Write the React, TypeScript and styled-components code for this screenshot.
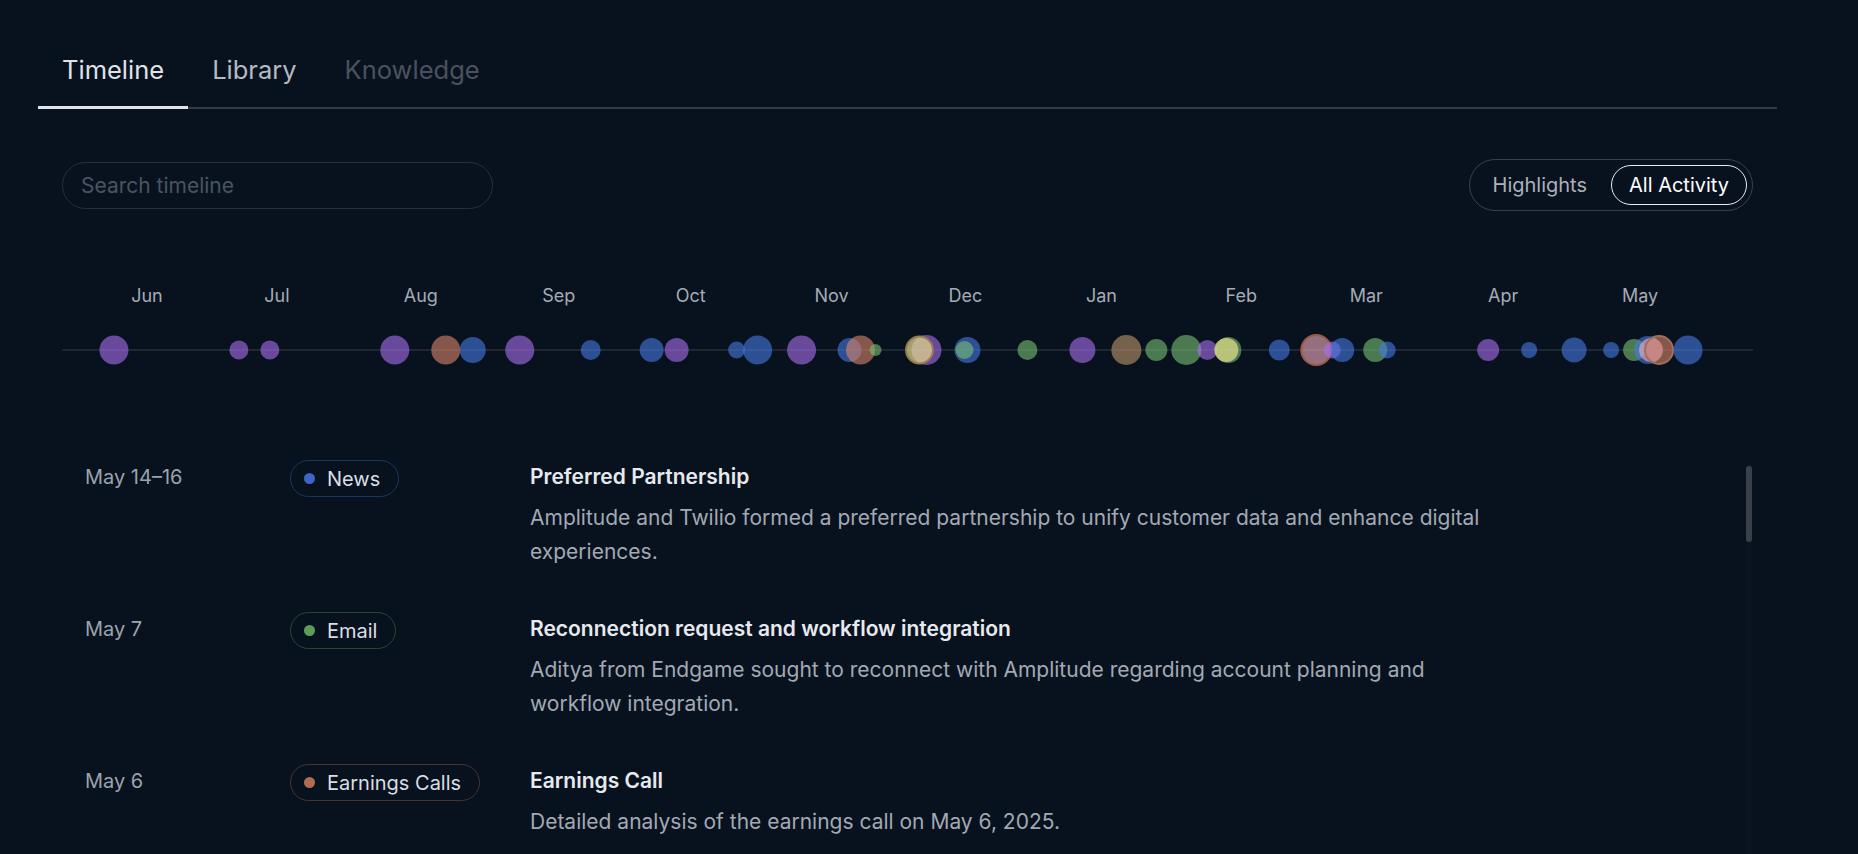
import React, { useState } from 'react';
import styled, { createGlobalStyle } from 'styled-components';

const GlobalStyle = createGlobalStyle`
  html, body {
    margin: 0;
    padding: 0;
    background: #08121e;
    font-family: Inter, "Noto Sans", sans-serif;
    color: #e2e6eb;
  }
  * { box-sizing: border-box; }
`;

const Page = styled.div`
  padding: 38px 81px 0 38px;
  height: 854px;
  overflow: hidden;
`;

const TabBar = styled.div`
  display: flex;
  border-bottom: 2px solid #343b46;
`;

const Tab = styled.button<{ $active?: boolean; $disabled?: boolean }>`
  background: none;
  border: none;
  border-bottom: 3px solid ${p => (p.$active ? '#dfe3e8' : 'transparent')};
  margin-bottom: -2px;
  padding: 16px 24px 20px;
  font-family: inherit;
  font-size: 25.5px;
  line-height: 32px;
  color: ${p => (p.$active ? '#dfe3e8' : p.$disabled ? '#4a515d' : '#b3bac4')};
  cursor: ${p => (p.$disabled ? 'default' : 'pointer')};
`;

const Panel = styled.div`
  padding: 0 24px;
`;

const Toolbar = styled.div`
  display: flex;
  justify-content: space-between;
  align-items: center;
  margin-top: 50px;
`;

const Search = styled.input`
  width: 431px;
  height: 47px;
  border: 1px solid #262f3c;
  border-radius: 999px;
  background: transparent;
  padding: 0 18px;
  font-family: inherit;
  font-size: 21px;
  color: #d9dee5;
  outline: none;
  &::placeholder {
    color: #4a5361;
  }
`;

const Toggle = styled.div`
  display: flex;
  gap: 6px;
  padding: 5px;
  border: 1px solid #39404b;
  border-radius: 999px;
`;

const ToggleButton = styled.button<{ $active?: boolean }>`
  height: 40px;
  padding: 0 17px;
  border-radius: 999px;
  border: 1.5px solid ${p => (p.$active ? '#e9ecf0' : 'transparent')};
  background: transparent;
  font-family: inherit;
  font-size: 20px;
  color: ${p => (p.$active ? '#ffffff' : '#aab1bc')};
  cursor: pointer;
`;

const Chart = styled.svg`
  display: block;
  width: 100%;
  height: 110px;
  margin-top: 61px;
  overflow: visible;
`;

const MonthLabel = styled.text`
  font-family: Inter, sans-serif;
  font-size: 18px;
  fill: #a4abb6;
`;

const ListWrap = styled.div`
  position: relative;
  margin-top: 60px;
`;

const List = styled.div`
  height: 420px;
  overflow-y: scroll;
  scrollbar-width: none;
  &::-webkit-scrollbar {
    display: none;
  }
`;

const Track = styled.div`
  position: absolute;
  right: 1px;
  top: 24px;
  bottom: 0;
  width: 6px;
  background: #0b1520;
  border-radius: 3px;
  pointer-events: none;
`;

const Thumb = styled.div`
  position: absolute;
  right: 1px;
  width: 6px;
  height: 76px;
  background: #3a4049;
  border-radius: 3px;
  pointer-events: none;
`;

const Row = styled.div`
  display: grid;
  grid-template-columns: 205px 240px 1fr;
  padding: 21px 0 25px 23px;
`;

const DateText = styled.div`
  font-size: 20px;
  line-height: 28px;
  color: #9ba3ae;
`;

const Badge = styled.div<{ $border: string }>`
  display: inline-flex;
  align-items: center;
  gap: 12px;
  height: 37px;
  margin-top: -3px;
  padding: 0 18px 0 13px;
  border: 1px solid ${p => p.$border};
  border-radius: 999px;
  font-size: 20px;
  color: #d9dee5;
  justify-self: start;
`;

const Dot = styled.span<{ $color: string }>`
  width: 11px;
  height: 11px;
  border-radius: 50%;
  background: ${p => p.$color};
`;

const Body = styled.div`
  max-width: 970px;
`;

const Title = styled.div`
  font-size: 21px;
  line-height: 28px;
  font-weight: 600;
  color: #e6eaef;
`;

const Desc = styled.div`
  margin-top: 10px;
  font-size: 21px;
  line-height: 34px;
  color: #a2a9b4;
`;

type Kind = 'news' | 'email' | 'earnings' | 'meeting' | 'filing';

const kinds: Record<Kind, { label: string; dot: string; border: string }> = {
  news: { label: 'News', dot: '#3d64c6', border: '#1c3463' },
  email: { label: 'Email', dot: '#5f9c5b', border: '#2a4632' },
  earnings: { label: 'Earnings Calls', dot: '#b06b52', border: '#47332f' },
  meeting: { label: 'Meetings', dot: '#8a5fd0', border: '#382a55' },
  filing: { label: 'Filings', dot: '#c8c07a', border: '#45432c' },
};

const events: { date: string; kind: Kind; title: string; text: string }[] = [
  { date: 'May 14–16', kind: 'news', title: 'Preferred Partnership', text: 'Amplitude and Twilio formed a preferred partnership to unify customer data and enhance digital experiences.' },
  { date: 'May 7', kind: 'email', title: 'Reconnection request and workflow integration', text: 'Aditya from Endgame sought to reconnect with Amplitude regarding account planning and workflow integration.' },
  { date: 'May 6', kind: 'earnings', title: 'Earnings Call', text: 'Detailed analysis of the earnings call on May 6, 2025.' },
  { date: 'May 2', kind: 'news', title: 'Product launch coverage', text: 'Press coverage of the new session replay and guides features released by Amplitude.' },
  { date: 'Apr 28', kind: 'news', title: 'Analyst note', text: 'Industry analysts reviewed Amplitude platform momentum heading into the quarter.' },
  { date: 'Apr 21', kind: 'news', title: 'Customer announcement', text: 'A new enterprise customer shared results from its adoption of the analytics suite.' },
  { date: 'Apr 9', kind: 'meeting', title: 'Quarterly business review', text: 'Account team walked through usage trends and renewal planning.' },
  { date: 'Mar 24', kind: 'email', title: 'Follow-up on pilot', text: 'Questions about pilot scope, success criteria and timeline.' },
  { date: 'Mar 18', kind: 'news', title: 'Leadership update', text: 'Amplitude announced a new executive joining the leadership team.' },
  { date: 'Mar 12', kind: 'earnings', title: 'Investor conference', text: 'Remarks from the investor conference on growth and profitability.' },
  { date: 'Feb 20', kind: 'filing', title: 'Annual report', text: 'Annual report filed with highlights on revenue and customer count.' },
  { date: 'Feb 13', kind: 'earnings', title: 'Earnings Call', text: 'Detailed analysis of the earnings call on February 13, 2025.' },
  { date: 'Jan 30', kind: 'email', title: 'Intro request', text: 'Introduction to the data platform team for an integration discussion.' },
  { date: 'Jan 15', kind: 'meeting', title: 'Kickoff meeting', text: 'Planning session to align on goals for the year.' },
];

const months: [string, number][] = [
  ['Jun', 85], ['Jul', 215], ['Aug', 359], ['Sep', 497], ['Oct', 629], ['Nov', 770],
  ['Dec', 904], ['Jan', 1040], ['Feb', 1180], ['Mar', 1305], ['Apr', 1442], ['May', 1579],
];

const fills: Record<string, [string, number]> = {
  p: ['#a86ef0', 0.6],
  b: ['#4679e3', 0.6],
  o: ['#da8567', 0.6],
  g: ['#78bf71', 0.6],
  y: ['#eee48d', 0.68],
  t: ['#b08e66', 0.65],
  k: ['#f7aec0', 0.6],
};

// x, diameter, colour key, optional ring colour
const dots: [number, number, string, string?][] = [
  [52, 29, 'p'], [177, 19, 'p'], [208, 19, 'p'], [333, 29, 'p'], [384, 29, 'o'],
  [411, 26, 'b'], [458, 29, 'p'], [529, 20, 'b'], [590, 24, 'b'], [615, 24, 'p'],
  [675, 17, 'b'], [696, 29, 'b'], [740, 29, 'p'], [788, 24, 'b'], [799, 29, 'o'],
  [814, 12, 'g'], [865, 30, 'p'], [858, 27, 'y', '#9a7a52'], [906, 26, 'b'], [903, 18, 'g'],
  [966, 20, 'g'], [1021, 26, 'p'], [1065, 30, 't'], [1095, 22, 'g'], [1125, 30, 'g'],
  [1146, 20, 'p'], [1167, 26, 'g'], [1165, 24, 'y'], [1218, 21, 'b'], [1255, 30, 'k', '#9a5a44'],
  [1271, 17, 'p'], [1281, 24, 'b'], [1314, 24, 'g'], [1326, 17, 'b'], [1427, 22, 'p'],
  [1468, 16, 'b'], [1513, 25, 'b'], [1550, 16, 'b'], [1573, 22, 'g'], [1587, 28, 'b'],
  [1590, 24, 'k'], [1598, 28, 'o', '#a0705a'], [1627, 29, 'b'],
];

const Timeline: React.FC = () => (
  <Chart viewBox="0 0 1692 110" preserveAspectRatio="none">
    {months.map(([m, x]) => (
      <MonthLabel key={m} x={x} y={30} textAnchor="middle">{m}</MonthLabel>
    ))}
    <line x1={0} y1={78} x2={1692} y2={78} stroke="#1e2732" strokeWidth={2} />
    {dots.map(([x, d, c, ring], i) => (
      <circle
        key={i}
        cx={x}
        cy={78}
        r={d / 2}
        fill={fills[c][0]}
        fillOpacity={fills[c][1]}
        stroke={ring}
        strokeWidth={ring ? 2 : 0}
      />
    ))}
  </Chart>
);

const TRACK_TOP = 24;
const THUMB_H = 76;

export default function App() {
  const [mode, setMode] = useState<'highlights' | 'all'>('all');
  const [thumbTop, setThumbTop] = useState(TRACK_TOP);

  const onScroll = (e: React.UIEvent<HTMLDivElement>) => {
    const el = e.currentTarget;
    const range = el.scrollHeight - el.clientHeight;
    const trackLen = el.clientHeight - TRACK_TOP - THUMB_H;
    setThumbTop(TRACK_TOP + (range > 0 ? (el.scrollTop / range) * trackLen : 0));
  };

  return (
    <>
      <GlobalStyle />
      <Page>
        <TabBar>
          <Tab $active>Timeline</Tab>
          <Tab>Library</Tab>
          <Tab $disabled>Knowledge</Tab>
        </TabBar>
        <Panel>
          <Toolbar>
            <Search placeholder="Search timeline" />
            <Toggle>
              <ToggleButton $active={mode === 'highlights'} onClick={() => setMode('highlights')}>Highlights</ToggleButton>
              <ToggleButton $active={mode === 'all'} onClick={() => setMode('all')}>All Activity</ToggleButton>
            </Toggle>
          </Toolbar>
          <Timeline />
          <ListWrap>
            <List onScroll={onScroll}>
              {events.map((e, i) => {
                const k = kinds[e.kind];
                return (
                  <Row key={i}>
                    <DateText>{e.date}</DateText>
                    <Badge $border={k.border}>
                      <Dot $color={k.dot} />
                      {k.label}
                    </Badge>
                    <Body>
                      <Title>{e.title}</Title>
                      <Desc>{e.text}</Desc>
                    </Body>
                  </Row>
                );
              })}
            </List>
            <Track />
            <Thumb style={{ top: thumbTop }} />
          </ListWrap>
        </Panel>
      </Page>
    </>
  );
}
